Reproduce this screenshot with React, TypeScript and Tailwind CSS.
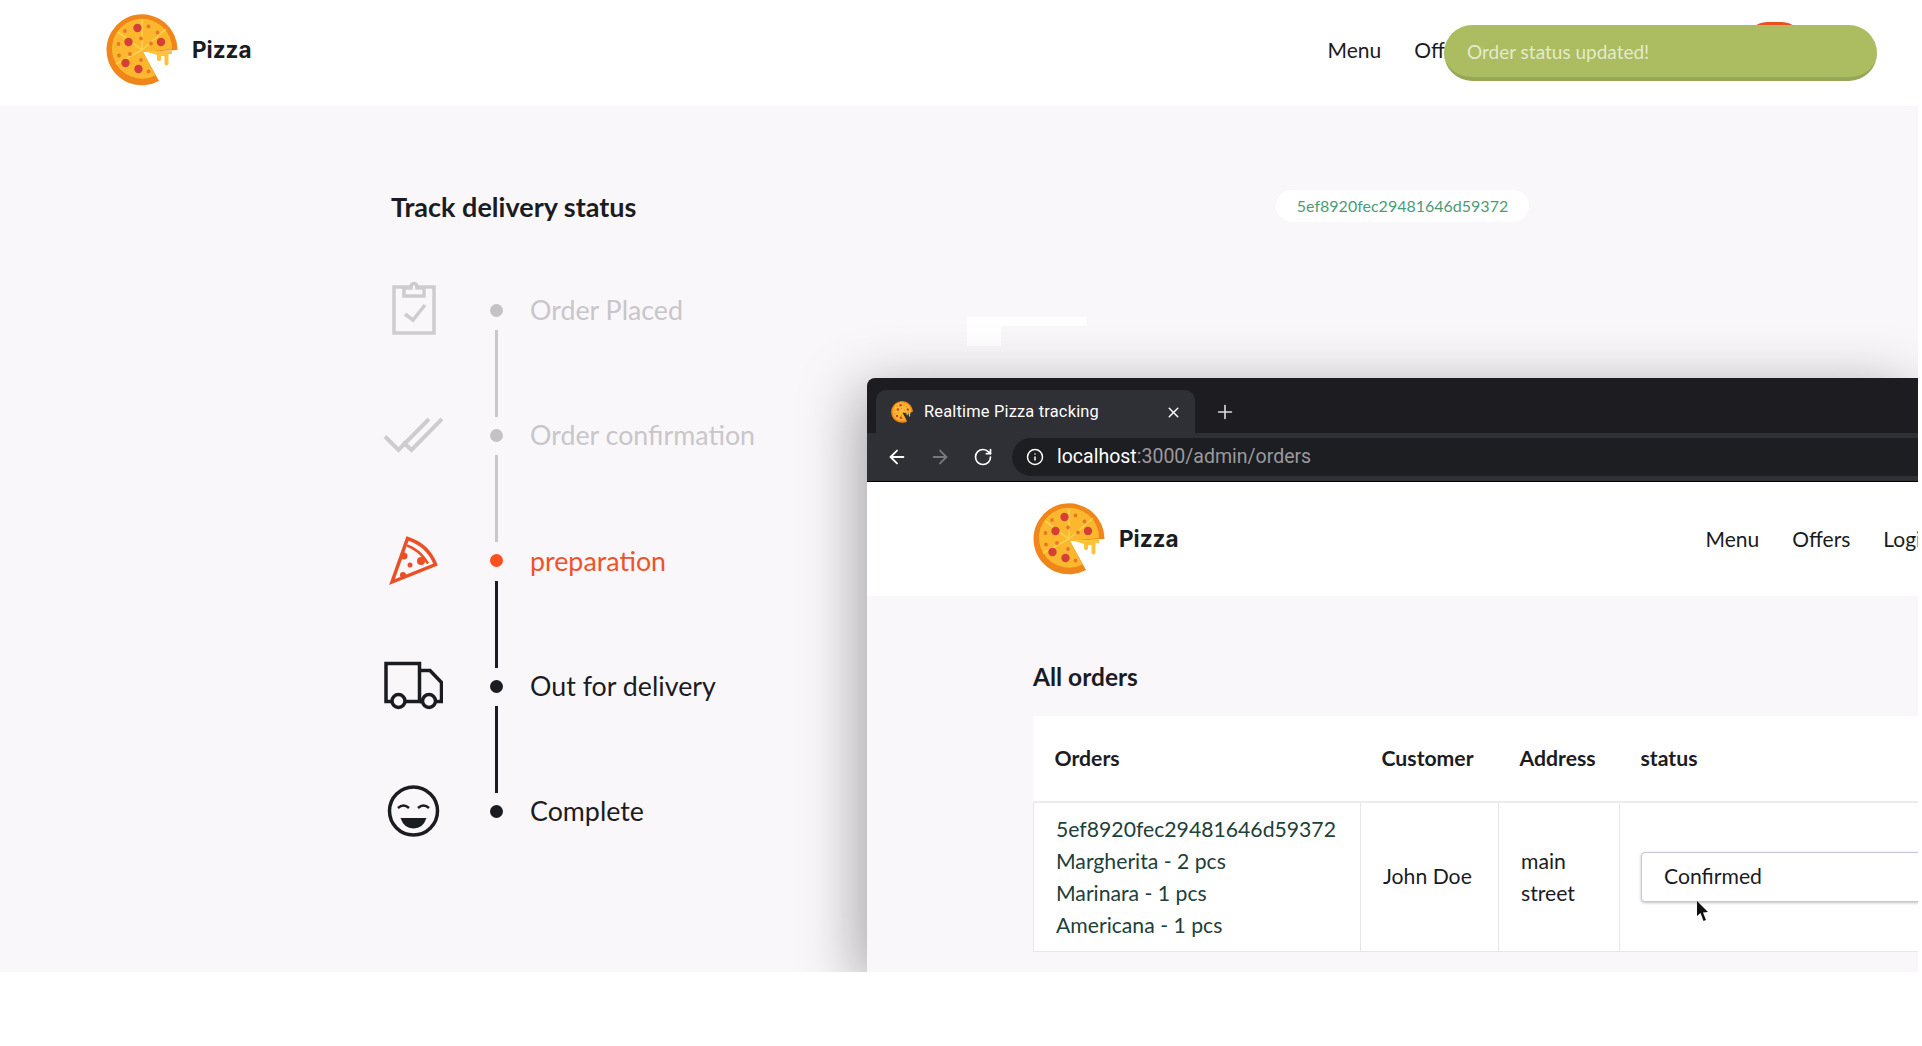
import React from 'react';
import { ArrowLeft, ArrowRight, Info, Plus, RotateCw, X } from 'lucide-react';

const SMALL_TOPPINGS: [number, number][] = [
  [19, 17], [42.5, 12.5], [51.5, 18.5], [12.5, 30], [35, 24.5], [45, 29.5], [13, 41.5], [24, 40], [35, 46], [42.5, 57.5],
];
const PEPPERONI: [number, number][] = [
  [31.5, 14], [22.5, 28], [55, 28], [19.5, 49], [32.5, 55],
];

const PizzaLogo = ({ size }: { size: number }) => (
  <svg width={size} height={size} viewBox="0 0 72 72" className="shrink-0">
    <path d="M37 38 L71.5 36 A35.5 35.5 0 1 0 53 67 Z" fill="#f0851a" />
    <path d="M37 38 L66 35 A30 30 0 1 0 49.5 61.5 Z" fill="#fbb82e" />
    <path d="M36 36 L36 6 M36 36 L12 18 M36 36 L10 50 M36 36 L60 15" stroke="#fdd04f" strokeWidth="1.6" />
    {PEPPERONI.map(([x, y]) => (
      <circle key={`${x}-${y}`} cx={x} cy={y} r="4.2" fill="#d63f38" />
    ))}
    {SMALL_TOPPINGS.map(([x, y]) => (
      <circle key={`${x}-${y}`} cx={x} cy={y} r="1.9" fill="#e8762a" />
    ))}
    <path d="M38 37 H66 V40 H62.5 V50 Q60.5 53 58.5 50 V42 H55 V46 Q53 48 51 46 V41 Z" fill="#fbc23a" />
  </svg>
);

const OrderIcon = ({ color }: { color: string }) => (
  <svg width="60" height="60" viewBox="0 0 60 60" fill="none" stroke={color} strokeWidth="3.5">
    <rect x="11" y="7" width="40" height="46" />
    <path d="M21 8 V16 H41 V8 H34 Q34 3.5 31 3.5 Q28 3.5 28 8 Z" fill="#faf7fa" />
    <path d="M22 34 L30 40 L42 25" />
  </svg>
);

const ConfirmIcon = ({ color }: { color: string }) => (
  <svg width="60" height="60" viewBox="0 0 60 60" fill="none" stroke={color} strokeWidth="4">
    <path d="M2 31.5 L15.5 45 L46 14" />
    <path d="M20 37 L28.5 45 L59 14" />
  </svg>
);

const SliceIcon = ({ color }: { color: string }) => (
  <svg width="60" height="60" viewBox="0 0 60 60" fill="none" stroke={color} strokeWidth="3.5">
    <path d="M9 51 L24.5 7.5 Q45 14 52.5 33.5 Z" />
    <path d="M24 14.5 Q37 19 45 32.5" strokeWidth="2.5" />
    <circle cx="21" cy="25" r="3.5" fill={color} stroke="none" />
    <circle cx="38" cy="30" r="4" fill={color} stroke="none" />
    <circle cx="27" cy="34" r="2.5" fill={color} stroke="none" />
    <circle cx="20" cy="44" r="3" fill={color} stroke="none" />
  </svg>
);

const TruckIcon = ({ color }: { color: string }) => (
  <svg width="60" height="60" viewBox="0 0 60 60" fill="none" stroke={color} strokeWidth="3.5">
    <path d="M8 45.5 H3 V7.5 H36.5 V45.5 H22" />
    <path d="M36.5 14.5 H47 L58.5 26.5 V45.5 H53" />
    <path d="M36.5 45.5 H39" />
    <circle cx="15.5" cy="45" r="6.5" />
    <circle cx="46" cy="45" r="6.5" />
  </svg>
);

const SmileIcon = ({ color }: { color: string }) => (
  <svg width="60" height="60" viewBox="0 0 60 60" fill="none" stroke={color} strokeWidth="3.5">
    <circle cx="30.5" cy="29" r="24" />
    <path d="M15 26 Q20.5 21 26 26 M35 26 Q40.5 21 46 26" strokeWidth="2.5" />
    <path d="M17.5 36 H43.5 Q40 46.5 30.5 46.5 Q21 46.5 17.5 36 Z" fill={color} stroke="none" />
  </svg>
);

const GREY = '#cfcccf';
const ACTIVE = '#ea5026';
const DARK = '#1b1c22';

const STEPS = [
  { label: 'Order Placed', Icon: OrderIcon, color: GREY, text: 'text-[#c9c6c9]', dot: 'bg-[#c4c2c4]', line: 'bg-[#c9c7c9]' },
  { label: 'Order confirmation', Icon: ConfirmIcon, color: GREY, text: 'text-[#c9c6c9]', dot: 'bg-[#c4c2c4]', line: 'bg-[#c9c7c9]' },
  { label: 'preparation', Icon: SliceIcon, color: ACTIVE, text: 'text-[#f0522a]', dot: 'bg-[#f8511e]', line: 'bg-[#1b1c22]' },
  { label: 'Out for delivery', Icon: TruckIcon, color: DARK, text: 'text-[#1b1c22]', dot: 'bg-[#1b1c22]', line: 'bg-[#1b1c22]' },
  { label: 'Complete', Icon: SmileIcon, color: DARK, text: 'text-[#1b1c22]', dot: 'bg-[#1b1c22]', line: '' },
];

const Timeline = () => (
  <ul className="mt-[56px] ml-[-8px]">
    {STEPS.map(({ label, Icon, color, text, dot, line }, i) => (
      <li key={label} className="relative flex h-[125.4px] items-start">
        <div className="flex h-[60px] items-center">
          <Icon color={color} />
          <span className={`ml-[47px] h-[13px] w-[13px] rounded-full ${dot}`} />
          <span className={`ml-[27px] text-[26.8px] ${text}`}>{label}</span>
        </div>
        {i < STEPS.length - 1 && (
          <span className={`absolute left-[111.5px] top-[50px] h-[87px] w-[3px] ${line}`} />
        )}
      </li>
    ))}
  </ul>
);

const OrdersWindow = () => (
  <div className="absolute left-[867px] right-0 top-[378px] bottom-0 overflow-hidden rounded-tl-[8px] bg-[#faf7fa] shadow-[-8px_12px_60px_rgba(0,0,0,0.35)]">
    <div className="h-[55px] bg-[#1c1c21] pl-[9px] pt-[12px]">
      <div className="flex h-[43px] w-[319px] items-center rounded-t-[10px] bg-[#2f3036] pl-[15px] pr-[13px] pt-[1px] text-white">
        <PizzaLogo size={22} />
        <span className="ml-[11px] font-['Roboto',sans-serif] text-[16.4px] tracking-[0.2px]">Realtime Pizza tracking</span>
        <X size={17} className="ml-auto" />
        <Plus size={22} strokeWidth={1.75} className="absolute left-[347px] text-[#dcdcdc]" />
      </div>
    </div>
    <div className="flex h-[49px] items-center border-b border-black bg-[#2f3036] pl-[19px]">
      <ArrowLeft size={22} className="text-white" />
      <ArrowRight size={22} className="ml-[21px] text-[#77787c]" />
      <RotateCw size={20} className="ml-[22px] text-white" />
      <div className="ml-[19px] flex h-[38px] flex-1 items-center rounded-l-full bg-[#1d1e22] pl-[14px] font-['Roboto',sans-serif] text-[19.5px] text-[#9a9a9d]">
        <Info size={18} className="mr-[13px] text-white" />
        <span className="text-white">localhost</span>:3000/admin/orders
      </div>
    </div>
    <header className="flex h-[114px] items-center bg-white pl-[166px]">
      <PizzaLogo size={72} />
      <span className="ml-[14px] font-['Inter',sans-serif] text-[22.5px] font-bold text-[#1b1c22]">Pizza</span>
      <nav className="ml-[527px] flex gap-[33px] whitespace-nowrap text-[21px] text-[#1b1c22]">
        <span>Menu</span>
        <span>Offers</span>
        <span>Login</span>
      </nav>
    </header>
    <section className="pl-[166px] pt-[67px]">
      <h2 className="text-[24.5px] font-bold leading-[28px] text-[#1b1c22]">All orders</h2>
      <table className="mt-[25px] w-[900px] table-fixed border-collapse bg-white text-[21.2px] text-[#1b1c22]">
        <thead>
          <tr className="h-[86px] border-b-2 border-[#ececf0] text-left font-bold">
            <th className="w-[327px] pl-[21px]">Orders</th>
            <th className="w-[138px] pl-[21px]">Customer</th>
            <th className="w-[121px] pl-[21px]">Address</th>
            <th className="pl-[21px]">status</th>
          </tr>
        </thead>
        <tbody>
          <tr className="h-[149px] border border-[#e6e5ea]">
            <td className="border border-[#e6e5ea] pl-[22px] text-[#20403a] leading-[32px]">
              <p>5ef8920fec29481646d59372</p>
              <p>Margherita - 2 pcs</p>
              <p>Marinara - 1 pcs</p>
              <p>Americana - 1 pcs</p>
            </td>
            <td className="border border-[#e6e5ea] pl-[22px]">John Doe</td>
            <td className="border border-[#e6e5ea] pl-[22px] leading-[32px]">main street</td>
            <td className="border border-[#e6e5ea] pl-[21px]">
              <div className="flex h-[50px] w-[400px] items-center rounded-[4px] border border-[#c5c6dc] bg-white pl-[22px] shadow-[0_1px_3px_rgba(0,0,0,0.25)]">
                Confirmed
              </div>
            </td>
          </tr>
        </tbody>
      </table>
    </section>
    {/* mouse pointer */}
    <svg width="14" height="22" viewBox="0 0 14 22" className="absolute left-[829px] top-[523px]">
      <path d="M1 0 L1 15 L4.5 12 L7.5 20 L10 19 L7 11.5 L12 11 Z" fill="#111" />
    </svg>
  </div>
);

export default function App() {
  return (
    <div className="h-[1046px] w-[1922px] overflow-hidden bg-white font-['Lato','Liberation_Sans',sans-serif]">
      <div className="relative mr-[4px] h-[972px] overflow-hidden bg-[#faf7fa]">
        <header className="flex h-[106px] items-center bg-white pl-[106px] pb-[6px]">
          <PizzaLogo size={72} />
          <span className="ml-[14px] font-['Inter',sans-serif] text-[22.5px] font-bold text-[#1b1c22]">Pizza</span>
          <nav className="ml-[1076px] flex gap-[33px] text-[21px] text-[#1b1c22]">
            <span>Menu</span>
            <span>Offers</span>
          </nav>
        </header>

        <main className="relative pl-[391px] pt-[84px]">
          <h1 className="text-[27px] font-bold leading-[34px] text-[#1b1c22]">Track delivery status</h1>
          <Timeline />
          <span className="absolute left-[1276px] top-[84px] flex h-[32px] w-[253px] items-center justify-center rounded-full bg-white text-[16px] text-[#4a9c78]">
            5ef8920fec29481646d59372
          </span>
        </main>

        <span className="absolute left-[967px] top-[317px] h-[9px] w-[120px] bg-white" />
        <span className="absolute left-[967px] top-[326px] h-[20px] w-[34px] bg-white" />

        <OrdersWindow />

        <span className="absolute left-[1747px] top-[22px] h-[20px] w-[55px] rounded-t-[20px] bg-[#e8501f]" />
        <div className="absolute left-[1444px] top-[25px] flex h-[56px] w-[433px] items-center rounded-full border-b-[4px] border-[#96a858] bg-[#abbd60] pl-[23px] text-[19px] leading-[24px] text-white/70">
          <span className="translate-y-[1px]">Order status updated!</span>
        </div>
      </div>
    </div>
  );
}
